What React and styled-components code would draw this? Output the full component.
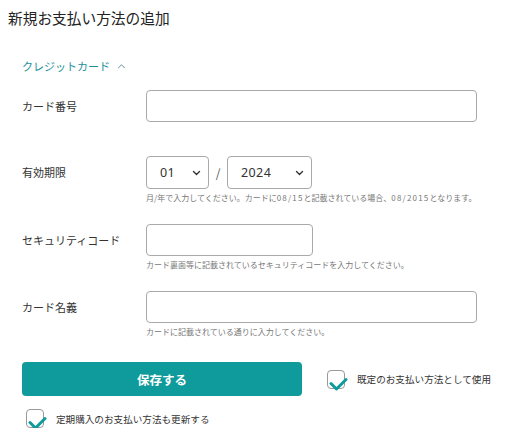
import React from 'react'
import styled, { createGlobalStyle } from 'styled-components'

const colors = {
  teal: '#0f9b9b',
  tealText: '#1b8f99',
  text: '#333333',
  help: '#777777',
  border: '#a9a9a9',
}

const GlobalStyle = createGlobalStyle`
  html, body {
    margin: 0;
    padding: 0;
    background: #ffffff;
  }
  body {
    font-family: "Noto Sans CJK JP", "Noto Sans", sans-serif;
    color: ${colors.text};
  }
`

const Chevron = ({ up }) => (
  <svg width="9" height="6" viewBox="0 0 9 6" fill="none">
    <path
      d={up ? 'M1.5 4.8 L4.5 1.8 L7.5 4.8' : 'M1.5 1.5 L4.5 4.5 L7.5 1.5'}
      stroke={up ? '#5a8f96' : '#333'}
      strokeWidth={up ? 1 : 1.4}
      strokeLinecap="round"
      strokeLinejoin="round"
    />
  </svg>
)

const CheckBox = ({ label }) => (
  <CheckLabel>
    <Box>
      <svg width="19" height="14" viewBox="0 0 19 14">
        <path d="M2 6.5 L7.5 12 L17 2.5" stroke={colors.teal} strokeWidth="3" fill="none" strokeLinecap="round" strokeLinejoin="round" />
      </svg>
    </Box>
    <span>{label}</span>
  </CheckLabel>
)

const SelectBox = ({ value, options, width }) => (
  <SelectWrap $width={width}>
    <Select defaultValue={value}>
      {options.map(o => <option key={o}>{o}</option>)}
    </Select>
    <SelectArrow><Chevron /></SelectArrow>
  </SelectWrap>
)

const App = () => {
  const months = Array.from({ length: 12 }, (_, i) => String(i + 1).padStart(2, '0'))
  const years = Array.from({ length: 10 }, (_, i) => String(2024 + i))

  return (
    <Page>
      <GlobalStyle />
      <Title>新規お支払い方法の追加</Title>
      <Section>
        <Toggle>
          クレジットカード
          <Chevron up />
        </Toggle>
        <Form>
          <Row $gap={34}>
            <Label>カード番号</Label>
            <Field>
              <Input $width={331} />
            </Field>
          </Row>
          <Row $gap={20}>
            <Label>有効期限</Label>
            <Field>
              <Expiry>
                <SelectBox value="01" options={months} width={63} />
                <Slash>/</Slash>
                <SelectBox value="2024" options={years} width={85} />
              </Expiry>
              <Help>月/年で入力してください。カードに<Num>08/15</Num>と記載されている場合、<Num>08/2015</Num>となります。</Help>
            </Field>
          </Row>
          <Row $gap={20}>
            <Label>セキュリティコード</Label>
            <Field>
              <Input $width={167} />
              <Help>カード裏面等に記載されているセキュリティコードを入力してください。</Help>
            </Field>
          </Row>
          <Row $gap={24}>
            <Label>カード名義</Label>
            <Field>
              <Input $width={331} />
              <Help>カードに記載されている通りに入力してください。</Help>
            </Field>
          </Row>
        </Form>
        <Actions>
          <SaveButton>保存する</SaveButton>
          <CheckBox label="既定のお支払い方法として使用" />
        </Actions>
        <Extra>
          <CheckBox label="定期購入のお支払い方法も更新する" />
        </Extra>
      </Section>
    </Page>
  )
}

export default App

const Page = styled.div`
  width: 512px;
  padding: 8px 8px 0;
  box-sizing: border-box;
`

const Title = styled.h1`
  margin: 0;
  font-size: 14.7px;
  line-height: 20px;
  font-weight: 400;
  color: #222;
`

const Section = styled.div`
  padding-left: 14px;
`

const Toggle = styled.div`
  margin-top: 28px;
  display: flex;
  align-items: center;
  gap: 7px;
  font-size: 11px;
  line-height: 20px;
  color: ${colors.tealText};
  cursor: pointer;
`

const Form = styled.div`
  margin-top: 14px;
  display: flex;
  flex-direction: column;
`

const Row = styled.div`
  display: grid;
  grid-template-columns: 124px 1fr;
  align-items: start;
  margin-bottom: ${p => p.$gap}px;
`

const Label = styled.div`
  font-size: 11px;
  line-height: 32px;
  color: ${colors.text};
`

const Field = styled.div`
  display: flex;
  flex-direction: column;
  align-items: flex-start;
`

const Input = styled.input`
  width: ${p => p.$width}px;
  height: 32px;
  box-sizing: border-box;
  border: 1px solid ${colors.border};
  border-radius: 4px;
  padding: 0 10px;
  font-family: inherit;
  font-size: 12px;
  outline: none;
`

const Expiry = styled.div`
  display: flex;
  align-items: center;
`

const SelectWrap = styled.div`
  position: relative;
  width: ${p => p.$width}px;
  height: 33px;
`

const Select = styled.select`
  appearance: none;
  width: 100%;
  height: 100%;
  box-sizing: border-box;
  border: 1px solid ${colors.border};
  border-radius: 4px;
  background: #fff;
  padding: 0 0 0 13px;
  font-family: "Noto Sans", sans-serif;
  font-size: 12.5px;
  letter-spacing: 0.4px;
  color: #333;
  outline: none;
`

const SelectArrow = styled.span`
  position: absolute;
  right: 8px;
  top: 14px;
  display: flex;
  pointer-events: none;
`

const Slash = styled.span`
  width: 18px;
  text-align: center;
  font-size: 12px;
  color: #555;
`

const Help = styled.p`
  margin: 3px 0 0;
  font-size: 8px;
  line-height: 12px;
  color: ${colors.help};
  white-space: nowrap;
`

const Num = styled.span`
  letter-spacing: 1.2px;
`

const Actions = styled.div`
  display: flex;
  align-items: center;
  gap: 25px;
`

const SaveButton = styled.button`
  width: 280px;
  height: 34px;
  border: none;
  border-radius: 4px;
  background: ${colors.teal};
  color: #fff;
  font-family: inherit;
  font-size: 12.5px;
  font-weight: 700;
  cursor: pointer;
`

const Extra = styled.div`
  margin-top: 13px;
  padding-left: 4px;
`

const CheckLabel = styled.label`
  display: flex;
  align-items: center;
  gap: 12px;
  font-size: 9.6px;
  color: ${colors.text};
  cursor: pointer;
`

const Box = styled.span`
  position: relative;
  width: 18px;
  height: 19px;
  box-sizing: border-box;
  border: 1px solid #999;
  border-radius: 4px;
  background: #fff;
  flex-shrink: 0;
  & > svg {
    position: absolute;
    left: 1px;
    top: 6px;
  }
`
